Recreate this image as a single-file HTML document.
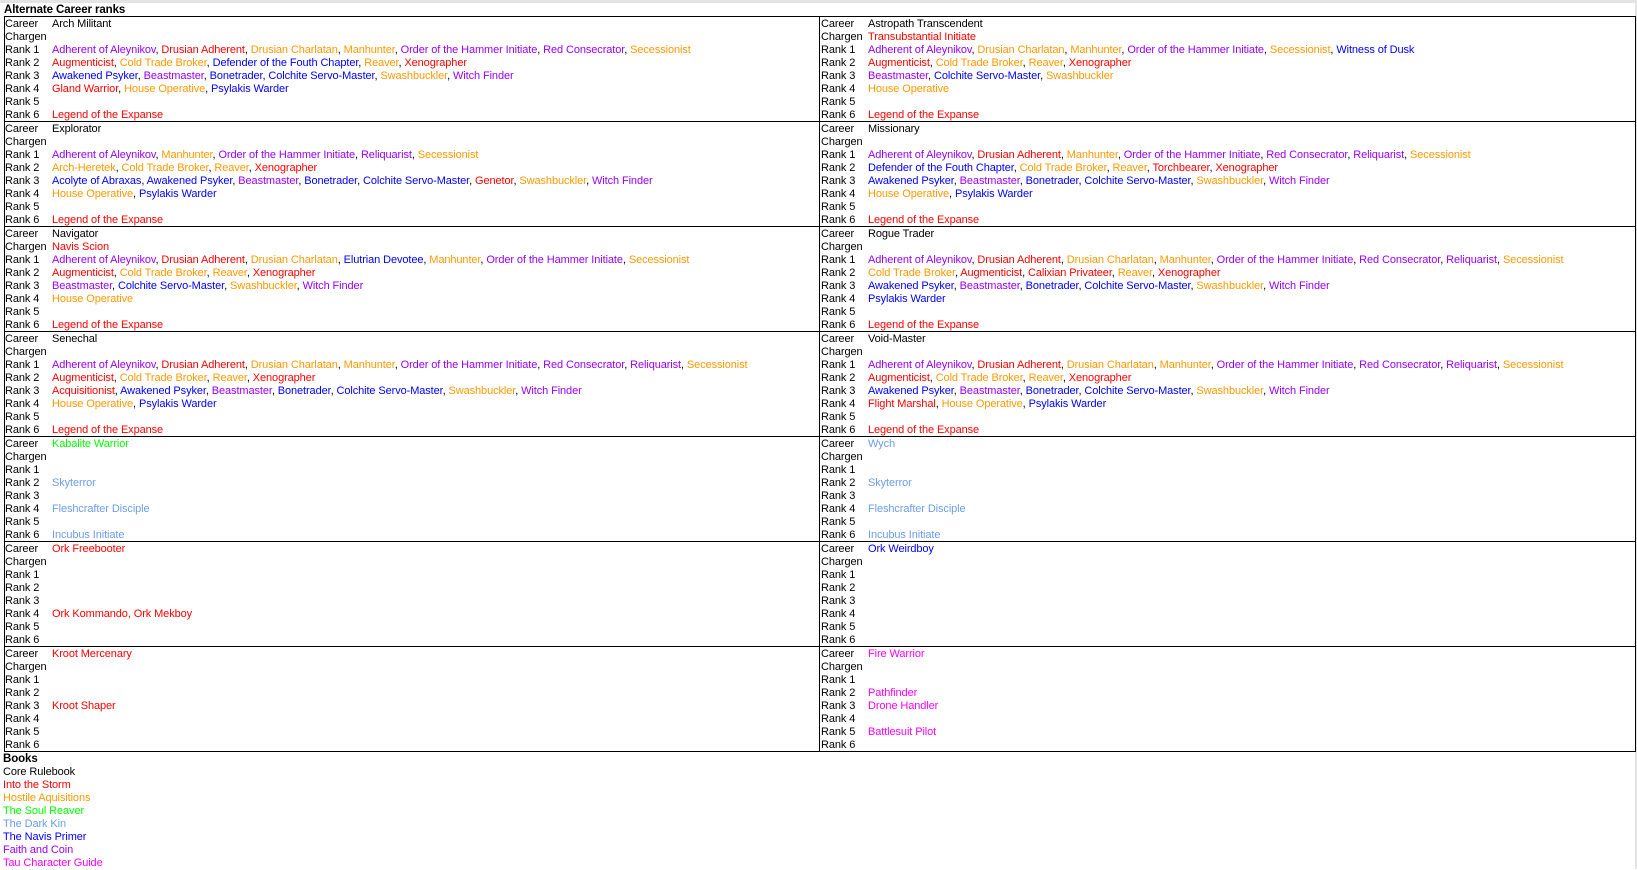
<!DOCTYPE html>
<html><head><meta charset="utf-8"><style>
body{margin:0;background:#fff;width:1637px;height:869px;overflow:hidden;position:relative;font-family:"Liberation Sans",Arial,sans-serif;font-size:11px;letter-spacing:-0.1px;color:#000}
.top{position:absolute;left:0;top:0;width:1637px;height:3px;background:#e4e4e4}
.rt{position:absolute;right:0;top:0;width:2px;height:869px;background:#e4e4e4}
.title{position:absolute;left:4px;top:4px;font-weight:bold;font-size:11.5px;line-height:13px}
.blk{position:absolute;left:4px;width:1630px;height:104px;border-left:1px solid #000;border-right:1px solid #000;border-top:1px solid #000}
.mid{position:absolute;left:814px;top:0;width:1px;height:105px;background:#000}
.col{position:absolute;top:1px}
.col div{height:13px;line-height:13px;white-space:nowrap;position:relative}
.col b{font-weight:normal;position:absolute;left:0}
.col i{font-style:normal;position:absolute;left:47px}
.L{left:0}.R{left:816px}
.bot{position:absolute;left:4px;top:751px;width:1632px;height:1px;background:#000}
.books{position:absolute;left:3px;top:753px}
.books div{height:13px;line-height:13px;white-space:nowrap}
.p{color:#9900ff}.r{color:#ff0000}.o{color:#ff9900}.b{color:#0000ff}.g{color:#00ff00}.l{color:#6d9eeb}.m{color:#ff00ff}
</style></head><body>
<div class="top"></div><div class="rt"></div>
<div class="title">Alternate Career ranks</div>

<div class="blk" style="top:16px"><div class="mid"></div>
<div class="col L">
<div><b>Career</b><i>Arch Militant</i></div>
<div><b>Chargen</b></div>
<div><b>Rank 1</b><i><span class="p">Adherent of Aleynikov</span>, <span class="r">Drusian Adherent</span>, <span class="o">Drusian Charlatan</span>, <span class="o">Manhunter</span>, <span class="p">Order of the Hammer Initiate</span>, <span class="p">Red Consecrator</span>, <span class="o">Secessionist</span></i></div>
<div><b>Rank 2</b><i><span class="r">Augmenticist</span>, <span class="o">Cold Trade Broker</span>, <span class="b">Defender of the Fouth Chapter</span>, <span class="o">Reaver</span>, <span class="r">Xenographer</span></i></div>
<div><b>Rank 3</b><i><span class="b">Awakened Psyker</span>, <span class="p">Beastmaster</span>, <span class="b">Bonetrader</span>, <span class="b">Colchite Servo-Master</span>, <span class="o">Swashbuckler</span>, <span class="p">Witch Finder</span></i></div>
<div><b>Rank 4</b><i><span class="r">Gland Warrior</span>, <span class="o">House Operative</span>, <span class="b">Psylakis Warder</span></i></div>
<div><b>Rank 5</b></div>
<div><b>Rank 6</b><i><span class="r">Legend of the Expanse</span></i></div>
</div>
<div class="col R">
<div><b>Career</b><i>Astropath Transcendent</i></div>
<div><b>Chargen</b><i><span class="r">Transubstantial Initiate</span></i></div>
<div><b>Rank 1</b><i><span class="p">Adherent of Aleynikov</span>, <span class="o">Drusian Charlatan</span>, <span class="o">Manhunter</span>, <span class="p">Order of the Hammer Initiate</span>, <span class="o">Secessionist</span>, <span class="b">Witness of Dusk</span></i></div>
<div><b>Rank 2</b><i><span class="r">Augmenticist</span>, <span class="o">Cold Trade Broker</span>, <span class="o">Reaver</span>, <span class="r">Xenographer</span></i></div>
<div><b>Rank 3</b><i><span class="p">Beastmaster</span>, <span class="b">Colchite Servo-Master</span>, <span class="o">Swashbuckler</span></i></div>
<div><b>Rank 4</b><i><span class="o">House Operative</span></i></div>
<div><b>Rank 5</b></div>
<div><b>Rank 6</b><i><span class="r">Legend of the Expanse</span></i></div>
</div></div>

<div class="blk" style="top:121px"><div class="mid"></div>
<div class="col L">
<div><b>Career</b><i>Explorator</i></div>
<div><b>Chargen</b></div>
<div><b>Rank 1</b><i><span class="p">Adherent of Aleynikov</span>, <span class="o">Manhunter</span>, <span class="p">Order of the Hammer Initiate</span>, <span class="p">Reliquarist</span>, <span class="o">Secessionist</span></i></div>
<div><b>Rank 2</b><i><span class="o">Arch-Heretek</span>, <span class="o">Cold Trade Broker</span>, <span class="o">Reaver</span>, <span class="r">Xenographer</span></i></div>
<div><b>Rank 3</b><i><span class="b">Acolyte of Abraxas</span>, <span class="b">Awakened Psyker</span>, <span class="p">Beastmaster</span>, <span class="b">Bonetrader</span>, <span class="b">Colchite Servo-Master</span>, <span class="r">Genetor</span>, <span class="o">Swashbuckler</span>, <span class="p">Witch Finder</span></i></div>
<div><b>Rank 4</b><i><span class="o">House Operative</span>, <span class="b">Psylakis Warder</span></i></div>
<div><b>Rank 5</b></div>
<div><b>Rank 6</b><i><span class="r">Legend of the Expanse</span></i></div>
</div>
<div class="col R">
<div><b>Career</b><i>Missionary</i></div>
<div><b>Chargen</b></div>
<div><b>Rank 1</b><i><span class="p">Adherent of Aleynikov</span>, <span class="r">Drusian Adherent</span>, <span class="o">Manhunter</span>, <span class="p">Order of the Hammer Initiate</span>, <span class="p">Red Consecrator</span>, <span class="p">Reliquarist</span>, <span class="o">Secessionist</span></i></div>
<div><b>Rank 2</b><i><span class="b">Defender of the Fouth Chapter</span>, <span class="o">Cold Trade Broker</span>, <span class="o">Reaver</span>, <span class="r">Torchbearer</span>, <span class="r">Xenographer</span></i></div>
<div><b>Rank 3</b><i><span class="b">Awakened Psyker</span>, <span class="p">Beastmaster</span>, <span class="b">Bonetrader</span>, <span class="b">Colchite Servo-Master</span>, <span class="o">Swashbuckler</span>, <span class="p">Witch Finder</span></i></div>
<div><b>Rank 4</b><i><span class="o">House Operative</span>, <span class="b">Psylakis Warder</span></i></div>
<div><b>Rank 5</b></div>
<div><b>Rank 6</b><i><span class="r">Legend of the Expanse</span></i></div>
</div></div>

<div class="blk" style="top:226px"><div class="mid"></div>
<div class="col L">
<div><b>Career</b><i>Navigator</i></div>
<div><b>Chargen</b><i><span class="r">Navis Scion</span></i></div>
<div><b>Rank 1</b><i><span class="p">Adherent of Aleynikov</span>, <span class="r">Drusian Adherent</span>, <span class="o">Drusian Charlatan</span>, <span class="b">Elutrian Devotee</span>, <span class="o">Manhunter</span>, <span class="p">Order of the Hammer Initiate</span>, <span class="o">Secessionist</span></i></div>
<div><b>Rank 2</b><i><span class="r">Augmenticist</span>, <span class="o">Cold Trade Broker</span>, <span class="o">Reaver</span>, <span class="r">Xenographer</span></i></div>
<div><b>Rank 3</b><i><span class="p">Beastmaster</span>, <span class="b">Colchite Servo-Master</span>, <span class="o">Swashbuckler</span>, <span class="p">Witch Finder</span></i></div>
<div><b>Rank 4</b><i><span class="o">House Operative</span></i></div>
<div><b>Rank 5</b></div>
<div><b>Rank 6</b><i><span class="r">Legend of the Expanse</span></i></div>
</div>
<div class="col R">
<div><b>Career</b><i>Rogue Trader</i></div>
<div><b>Chargen</b></div>
<div><b>Rank 1</b><i><span class="p">Adherent of Aleynikov</span>, <span class="r">Drusian Adherent</span>, <span class="o">Drusian Charlatan</span>, <span class="o">Manhunter</span>, <span class="p">Order of the Hammer Initiate</span>, <span class="p">Red Consecrator</span>, <span class="p">Reliquarist</span>, <span class="o">Secessionist</span></i></div>
<div><b>Rank 2</b><i><span class="o">Cold Trade Broker</span>, <span class="r">Augmenticist</span>, <span class="r">Calixian Privateer</span>, <span class="o">Reaver</span>, <span class="r">Xenographer</span></i></div>
<div><b>Rank 3</b><i><span class="b">Awakened Psyker</span>, <span class="p">Beastmaster</span>, <span class="b">Bonetrader</span>, <span class="b">Colchite Servo-Master</span>, <span class="o">Swashbuckler</span>, <span class="p">Witch Finder</span></i></div>
<div><b>Rank 4</b><i><span class="b">Psylakis Warder</span></i></div>
<div><b>Rank 5</b></div>
<div><b>Rank 6</b><i><span class="r">Legend of the Expanse</span></i></div>
</div></div>

<div class="blk" style="top:331px"><div class="mid"></div>
<div class="col L">
<div><b>Career</b><i>Senechal</i></div>
<div><b>Chargen</b></div>
<div><b>Rank 1</b><i><span class="p">Adherent of Aleynikov</span>, <span class="r">Drusian Adherent</span>, <span class="o">Drusian Charlatan</span>, <span class="o">Manhunter</span>, <span class="p">Order of the Hammer Initiate</span>, <span class="p">Red Consecrator</span>, <span class="p">Reliquarist</span>, <span class="o">Secessionist</span></i></div>
<div><b>Rank 2</b><i><span class="r">Augmenticist</span>, <span class="o">Cold Trade Broker</span>, <span class="o">Reaver</span>, <span class="r">Xenographer</span></i></div>
<div><b>Rank 3</b><i><span class="r">Acquisitionist</span>, <span class="b">Awakened Psyker</span>, <span class="p">Beastmaster</span>, <span class="b">Bonetrader</span>, <span class="b">Colchite Servo-Master</span>, <span class="o">Swashbuckler</span>, <span class="p">Witch Finder</span></i></div>
<div><b>Rank 4</b><i><span class="o">House Operative</span>, <span class="b">Psylakis Warder</span></i></div>
<div><b>Rank 5</b></div>
<div><b>Rank 6</b><i><span class="r">Legend of the Expanse</span></i></div>
</div>
<div class="col R">
<div><b>Career</b><i>Void-Master</i></div>
<div><b>Chargen</b></div>
<div><b>Rank 1</b><i><span class="p">Adherent of Aleynikov</span>, <span class="r">Drusian Adherent</span>, <span class="o">Drusian Charlatan</span>, <span class="o">Manhunter</span>, <span class="p">Order of the Hammer Initiate</span>, <span class="p">Red Consecrator</span>, <span class="p">Reliquarist</span>, <span class="o">Secessionist</span></i></div>
<div><b>Rank 2</b><i><span class="r">Augmenticist</span>, <span class="o">Cold Trade Broker</span>, <span class="o">Reaver</span>, <span class="r">Xenographer</span></i></div>
<div><b>Rank 3</b><i><span class="b">Awakened Psyker</span>, <span class="p">Beastmaster</span>, <span class="b">Bonetrader</span>, <span class="b">Colchite Servo-Master</span>, <span class="o">Swashbuckler</span>, <span class="p">Witch Finder</span></i></div>
<div><b>Rank 4</b><i><span class="r">Flight Marshal</span>, <span class="o">House Operative</span>, <span class="b">Psylakis Warder</span></i></div>
<div><b>Rank 5</b></div>
<div><b>Rank 6</b><i><span class="r">Legend of the Expanse</span></i></div>
</div></div>

<div class="blk" style="top:436px"><div class="mid"></div>
<div class="col L">
<div><b>Career</b><i class="g">Kabalite Warrior</i></div>
<div><b>Chargen</b></div>
<div><b>Rank 1</b></div>
<div><b>Rank 2</b><i class="l">Skyterror</i></div>
<div><b>Rank 3</b></div>
<div><b>Rank 4</b><i class="l">Fleshcrafter Disciple</i></div>
<div><b>Rank 5</b></div>
<div><b>Rank 6</b><i class="l">Incubus Initiate</i></div>
</div>
<div class="col R">
<div><b>Career</b><i class="l">Wych</i></div>
<div><b>Chargen</b></div>
<div><b>Rank 1</b></div>
<div><b>Rank 2</b><i class="l">Skyterror</i></div>
<div><b>Rank 3</b></div>
<div><b>Rank 4</b><i class="l">Fleshcrafter Disciple</i></div>
<div><b>Rank 5</b></div>
<div><b>Rank 6</b><i class="l">Incubus Initiate</i></div>
</div></div>

<div class="blk" style="top:541px"><div class="mid"></div>
<div class="col L">
<div><b>Career</b><i class="r">Ork Freebooter</i></div>
<div><b>Chargen</b></div>
<div><b>Rank 1</b></div>
<div><b>Rank 2</b></div>
<div><b>Rank 3</b></div>
<div><b>Rank 4</b><i class="r">Ork Kommando, Ork Mekboy</i></div>
<div><b>Rank 5</b></div>
<div><b>Rank 6</b></div>
</div>
<div class="col R">
<div><b>Career</b><i class="b">Ork Weirdboy</i></div>
<div><b>Chargen</b></div>
<div><b>Rank 1</b></div>
<div><b>Rank 2</b></div>
<div><b>Rank 3</b></div>
<div><b>Rank 4</b></div>
<div><b>Rank 5</b></div>
<div><b>Rank 6</b></div>
</div></div>

<div class="blk" style="top:646px"><div class="mid"></div>
<div class="col L">
<div><b>Career</b><i class="r">Kroot Mercenary</i></div>
<div><b>Chargen</b></div>
<div><b>Rank 1</b></div>
<div><b>Rank 2</b></div>
<div><b>Rank 3</b><i class="r">Kroot Shaper</i></div>
<div><b>Rank 4</b></div>
<div><b>Rank 5</b></div>
<div><b>Rank 6</b></div>
</div>
<div class="col R">
<div><b>Career</b><i class="m">Fire Warrior</i></div>
<div><b>Chargen</b></div>
<div><b>Rank 1</b></div>
<div><b>Rank 2</b><i class="m">Pathfinder</i></div>
<div><b>Rank 3</b><i class="m">Drone Handler</i></div>
<div><b>Rank 4</b></div>
<div><b>Rank 5</b><i class="m">Battlesuit Pilot</i></div>
<div><b>Rank 6</b></div>
</div></div>
<div class="bot"></div>

<div class="books">
<div style="font-weight:bold;font-size:11.5px">Books</div>
<div>Core Rulebook</div>
<div class="r">Into the Storm</div>
<div class="o">Hostile Aquisitions</div>
<div class="g">The Soul Reaver</div>
<div class="l">The Dark Kin</div>
<div class="b">The Navis Primer</div>
<div class="p">Faith and Coin</div>
<div class="m">Tau Character Guide</div>
</div>
</body></html>
